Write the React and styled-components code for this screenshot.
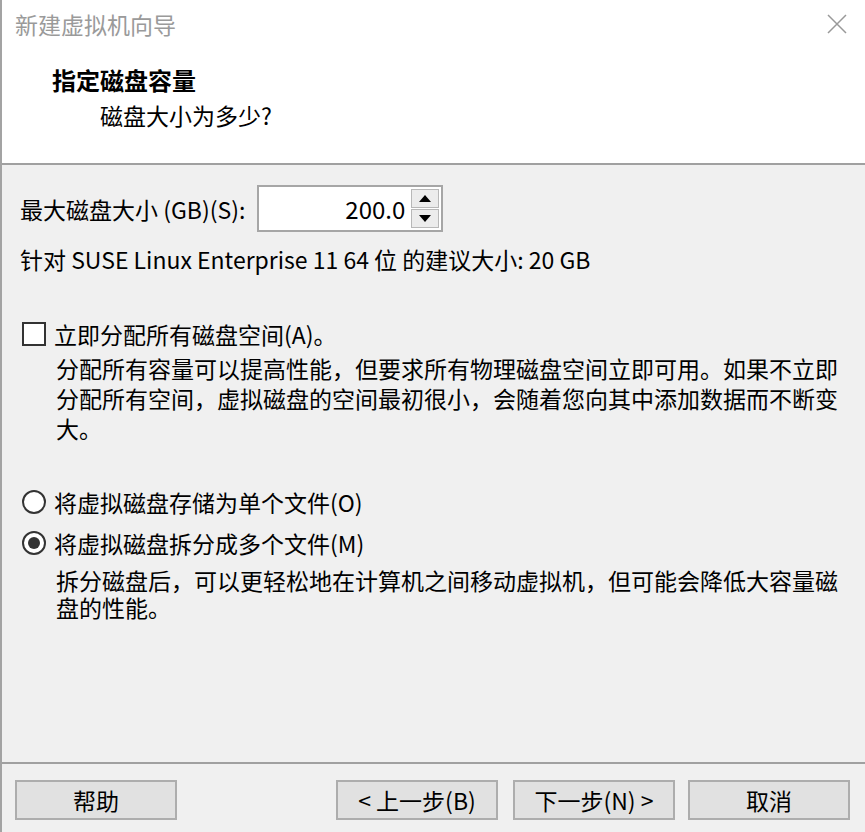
import React from 'react';
import styled, { createGlobalStyle } from 'styled-components';

const GlobalStyle = createGlobalStyle`
  html, body {
    margin: 0;
    padding: 0;
    background: #f0f0f0;
  }
  body {
    font-family: "Noto Sans CJK SC", "Noto Sans", sans-serif;
    color: #000;
  }
`;

const Window = styled.div`
  width: 865px;
  height: 832px;
  box-sizing: border-box;
  border-left: 2px solid #a3a3a3;
  display: flex;
  flex-direction: column;
  background: #f0f0f0;
  overflow: hidden;
`;

const Header = styled.div`
  height: 165px;
  flex-shrink: 0;
  box-sizing: border-box;
  background: #fff;
  border-bottom: 2px solid #a0a0a0;
  display: flex;
  flex-direction: column;
`;

const TitleBar = styled.div`
  height: 48px;
  display: flex;
  align-items: center;
  justify-content: space-between;
  padding: 0 18px 0 13px;
`;

const Title = styled.span`
  font-size: 23px;
  color: #9a9a9a;
  line-height: 30px;
`;

const CloseButton = styled.div`
  width: 20px;
  height: 20px;
  display: flex;
  align-items: center;
  justify-content: center;
`;

const Heading = styled.div`
  margin: 17px 0 0 50px;
  font-size: 24px;
  font-weight: 700;
  line-height: 30px;
`;

const SubHeading = styled.div`
  margin: 5px 0 0 98px;
  font-size: 23px;
  line-height: 30px;
`;

const Body = styled.div`
  flex: 1;
  padding: 20px 0 0 18px;
  display: flex;
  flex-direction: column;
  font-size: 23px;
`;

const SizeRow = styled.div`
  display: flex;
  align-items: center;
  gap: 12px;
  height: 47px;
`;

const SpinBox = styled.div`
  width: 186px;
  height: 47px;
  box-sizing: border-box;
  border: 2px solid #a6a6a6;
  background: #fff;
  display: flex;
  align-items: center;
  padding: 2px 2px 2px 0;
`;

const SpinValue = styled.div`
  flex: 1;
  text-align: right;
  font-size: 24px;
  padding-right: 6px;
`;

const SpinButtons = styled.div`
  width: 28px;
  height: 100%;
  display: flex;
  flex-direction: column;
  gap: 1px;
`;

const SpinButton = styled.div`
  flex: 1;
  box-sizing: border-box;
  border: 1px solid #b8b8b8;
  background: #ececec;
  display: flex;
  align-items: center;
  justify-content: center;
`;

const Line = styled.div`
  line-height: 30px;
  margin-top: ${(p) => p.$top || 0}px;
  white-space: nowrap;
`;

const OptionRow = styled.div`
  display: flex;
  align-items: center;
  gap: 8px;
  line-height: 30px;
  margin-top: ${(p) => p.$top || 0}px;
`;

const CheckBox = styled.div`
  width: 24px;
  height: 24px;
  box-sizing: border-box;
  border: 2px solid #333;
  background: #fff;
  margin-left: 2px;
`;

const Radio = styled.div`
  width: 24px;
  height: 24px;
  box-sizing: border-box;
  border: 2px solid #333;
  border-radius: 50%;
  background: #fff;
  margin-left: 2px;
  display: flex;
  align-items: center;
  justify-content: center;

  &::after {
    content: '';
    display: ${(p) => (p.$checked ? 'block' : 'none')};
    width: 12px;
    height: 12px;
    border-radius: 50%;
    background: #333;
  }
`;

const Description = styled.div`
  margin: ${(p) => p.$top || 0}px 0 0 36px;
  width: 800px;
  line-height: ${(p) => p.$lh || 30}px;
  font-size: 23px;
`;

const Footer = styled.div`
  height: 70px;
  flex-shrink: 0;
  box-sizing: border-box;
  border-top: 2px solid #a0a0a0;
  display: flex;
  align-items: flex-start;
  padding: 16px 12px 0 13px;
`;

const Button = styled.button`
  width: 162px;
  height: 40px;
  box-sizing: border-box;
  border: 2px solid #adadad;
  background: #e1e1e1;
  font-family: "Noto Sans CJK SC", "Noto Sans", sans-serif;
  font-size: 23px;
  color: #000;
  padding: 0;
  margin-left: ${(p) => p.$gap || 0}px;
`;

const Triangle = ({ up }) => (
  <svg width="12" height="7" viewBox="0 0 12 7">
    <polygon points={up ? '0,7 6,0 12,7' : '0,0 12,0 6,7'} fill="#000" />
  </svg>
);

const App = () => (
  <>
    <GlobalStyle />
    <Window>
      <Header>
        <TitleBar>
          <Title>新建虚拟机向导</Title>
          <CloseButton>
            <svg width="20" height="20" viewBox="0 0 20 20">
              <path d="M1 1 L19 19 M19 1 L1 19" stroke="#999" strokeWidth="1.5" />
            </svg>
          </CloseButton>
        </TitleBar>
        <Heading>指定磁盘容量</Heading>
        <SubHeading>磁盘大小为多少?</SubHeading>
      </Header>
      <Body>
        <SizeRow>
          <span>最大磁盘大小 (GB)(S):</span>
          <SpinBox>
            <SpinValue>200.0</SpinValue>
            <SpinButtons>
              <SpinButton><Triangle up /></SpinButton>
              <SpinButton><Triangle /></SpinButton>
            </SpinButtons>
          </SpinBox>
        </SizeRow>
        <Line $top={12}>针对 SUSE Linux Enterprise 11 64 位 的建议大小: 20 GB</Line>

        <OptionRow $top={45}>
          <CheckBox />
          <span>立即分配所有磁盘空间(A)。</span>
        </OptionRow>
        <Description $top={4}>
          分配所有容量可以提高性能，但要求所有物理磁盘空间立即可用。如果不立即分配所有空间，虚拟磁盘的空间最初很小，会随着您向其中添加数据而不断变大。
        </Description>

        <OptionRow $top={44}>
          <Radio />
          <span>将虚拟磁盘存储为单个文件(O)</span>
        </OptionRow>
        <OptionRow $top={11}>
          <Radio $checked />
          <span>将虚拟磁盘拆分成多个文件(M)</span>
        </OptionRow>
        <Description $top={9} $lh={27}>
          拆分磁盘后，可以更轻松地在计算机之间移动虚拟机，但可能会降低大容量磁盘的性能。
        </Description>
      </Body>
      <Footer>
        <Button>帮助</Button>
        <Button $gap={159}>&lt; 上一步(B)</Button>
        <Button $gap={15}>下一步(N) &gt;</Button>
        <Button $gap={13}>取消</Button>
      </Footer>
    </Window>
  </>
);

export default App;
